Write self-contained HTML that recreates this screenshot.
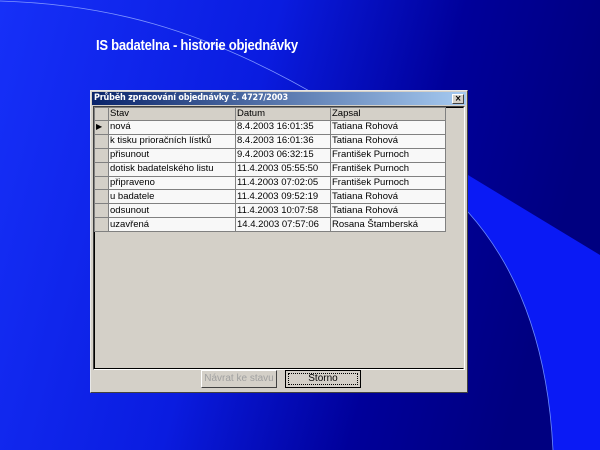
<!DOCTYPE html>
<html><head><meta charset="utf-8"><style>
*{margin:0;padding:0;box-sizing:border-box}
body{width:600px;height:450px;overflow:hidden;position:relative;font-family:"Liberation Sans",sans-serif;background:#0010c8}
svg.bg{position:absolute;left:0;top:0}
.title{position:absolute;left:96px;top:38px;color:#fff;font-size:14.5px;font-weight:bold;letter-spacing:-0.3px;transform:scaleX(0.9);transform-origin:0 0}
.dlg{position:absolute;left:90px;top:90px;width:378px;height:303px;background:#d4d0c8;border:1px solid #e8e8e8;border-right-color:#404040;border-bottom-color:#404040}
.tb{position:absolute;left:1px;top:1px;right:1px;height:13px;background:linear-gradient(90deg,#0a246a,#a6caf0);color:#fff;font-size:9px;font-weight:bold;line-height:13px;padding-left:2px;font-family:"DejaVu Sans Condensed","DejaVu Sans",sans-serif;letter-spacing:-0.2px}
.x{position:absolute;right:2px;top:2px;width:12px;height:10px;background:#d4d0c8;border:1px solid #fff;border-right-color:#404040;border-bottom-color:#404040;color:#000;font-size:9px;line-height:8px;text-align:center;font-weight:bold}
.grid{position:absolute;left:2px;top:15px;width:372px;height:264px;border:1px solid #404040;border-right-color:#fff;border-bottom-color:#fff;background:#d4d0c8}
.in{position:absolute;left:0;top:0;right:0;bottom:0;border:1px solid #000;border-right-color:#d4d0c8;border-bottom-color:#000}
table{position:absolute;left:0;top:0;border-collapse:collapse;font-size:9.5px;color:#000}
td{height:13.9px;border:1px solid #808080;padding:0 1px;line-height:12px;white-space:nowrap;background:#f8f8f8}
tr.h td{background:#d4d0c8;height:13px}
td.rh{width:14px;background:#d4d0c8;border-color:#808080}
.btn{position:absolute;top:279px;height:18px;font-size:10px;text-align:center;line-height:16px;background:#d4d0c8;border:1px solid #fff;border-right-color:#404040;border-bottom-color:#404040}
</style></head><body>
<svg class="bg" width="600" height="450">
<defs><linearGradient id="g" x1="0" x2="1" y1="0" y2="0.2"><stop offset="0" stop-color="#1630f8"/><stop offset="0.45" stop-color="#0a1ce0"/><stop offset="0.75" stop-color="#00009a"/><stop offset="1" stop-color="#000080"/></linearGradient></defs>
<rect width="600" height="450" fill="url(#g)"/>
<path d="M468 175 L600 255 L600 450 L553 450 C548 350 520 270 468 212Z" fill="#0a1af5"/>
<path d="M468 212 C520 270 548 350 553 450" stroke="#6a8aff" stroke-width="0.8" fill="none"/>
<path d="M0 1 C100 4 200 25 330 103" stroke="#7f95ff" stroke-width="0.8" fill="none"/>
</svg>
<div class="title">IS badatelna - historie objednávky</div>
<div class="dlg">
<div class="tb">Průběh zpracování objednávky č. 4727/2003<div class="x">×</div></div>
<div class="grid"><div class="in"></div>
<table>
<tr class="h"><td class="rh"></td><td style="width:127px">Stav</td><td style="width:95px">Datum</td><td style="width:115px">Zapsal</td></tr>
<tr><td class="rh" style="font-size:8px">▶</td><td>nová</td><td>8.4.2003 16:01:35</td><td>Tatiana Rohová</td></tr>
<tr><td class="rh"></td><td>k tisku prioračních lístků</td><td>8.4.2003 16:01:36</td><td>Tatiana Rohová</td></tr>
<tr><td class="rh"></td><td>přisunout</td><td>9.4.2003 06:32:15</td><td>František Purnoch</td></tr>
<tr><td class="rh"></td><td>dotisk badatelského listu</td><td>11.4.2003 05:55:50</td><td>František Purnoch</td></tr>
<tr><td class="rh"></td><td>připraveno</td><td>11.4.2003 07:02:05</td><td>František Purnoch</td></tr>
<tr><td class="rh"></td><td>u badatele</td><td>11.4.2003 09:52:19</td><td>Tatiana Rohová</td></tr>
<tr><td class="rh"></td><td>odsunout</td><td>11.4.2003 10:07:58</td><td>Tatiana Rohová</td></tr>
<tr><td class="rh"></td><td>uzavřená</td><td>14.4.2003 07:57:06</td><td>Rosana Štamberská</td></tr>
</table></div>
<div class="btn" style="left:110px;width:76px;color:#a0a0a0">Návrat ke stavu</div>
<div class="btn" style="left:194px;width:76px;border:1px solid #000"><div style="margin:2px;border:1px dotted #000;line-height:10px;height:12px">Storno</div></div>
</div>
</body></html>
